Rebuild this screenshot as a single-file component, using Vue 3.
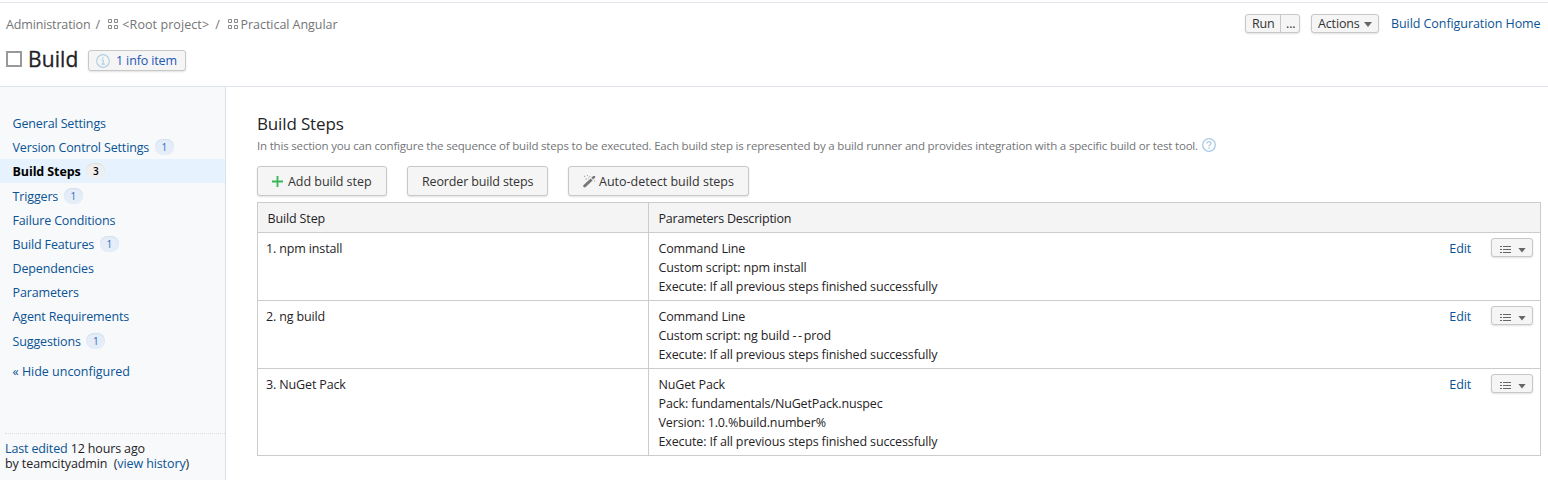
<script setup>
const menu = [
  { label: 'General Settings' },
  { label: 'Version Control Settings', count: 1 },
  { label: 'Build Steps', count: 3, active: true },
  { label: 'Triggers', count: 1 },
  { label: 'Failure Conditions' },
  { label: 'Build Features', count: 1 },
  { label: 'Dependencies' },
  { label: 'Parameters' },
  { label: 'Agent Requirements' },
  { label: 'Suggestions', count: 1 },
]

const steps = [
  {
    name: '1. npm install',
    lines: ['Command Line', 'Custom script: npm install', 'Execute: If all previous steps finished successfully'],
  },
  {
    name: '2. ng build',
    lines: ['Command Line', 'Custom script: ng build --prod', 'Execute: If all previous steps finished successfully'],
  },
  {
    name: '3. NuGet Pack',
    lines: [
      'NuGet Pack',
      'Pack: fundamentals/NuGetPack.nuspec',
      'Version: 1.0.%build.number%',
      'Execute: If all previous steps finished successfully',
    ],
  },
]
</script>

<template>
  <div class="page">
    <header class="header">
      <div class="bar">
        <nav class="crumbs">
          <span>Administration</span>
          <span class="sep">/</span>
          <svg class="grid-icon" width="11" height="11" viewBox="0 0 11 11">
            <path d="M.5.5h3v3H.5zM6.5.5h3v3H6.5zM.5 6.5h3v3H.5zM6.5 6.5h3v3H6.5z" />
          </svg>
          <span class="root">&lt;Root project&gt;</span>
          <span class="sep second">/</span>
          <svg class="grid-icon" width="11" height="11" viewBox="0 0 11 11">
            <path d="M.5.5h3v3H.5zM6.5.5h3v3H6.5zM.5 6.5h3v3H.5zM6.5 6.5h3v3H6.5z" />
          </svg>
          <span class="project">Practical Angular</span>
        </nav>
        <div class="tools">
          <div class="btn small run"><span>Run</span><span class="more">...</span></div>
          <div class="btn small actions"><span>Actions</span><i class="caret"></i></div>
          <a class="home">Build Configuration Home</a>
        </div>
      </div>
      <div class="title-row">
        <i class="status-box"></i>
        <h1>Build</h1>
        <div class="btn small info">
          <svg width="14" height="14" viewBox="0 0 14 14" fill="none" stroke="#b4d0e6" stroke-width="1.2">
            <circle cx="7" cy="7" r="6.3" />
            <path d="M7 3.1v1.4M5.4 6h1.8v4.2M5.2 10.2h3.8" />
          </svg>
          <a>1 info item</a>
        </div>
      </div>
    </header>

    <div class="body">
      <aside class="sidebar">
        <ul class="menu">
          <li v-for="item in menu" :key="item.label" :class="{ active: item.active }">
            <a>{{ item.label }}</a>
            <span v-if="item.count" class="badge">{{ item.count }}</span>
          </li>
        </ul>
        <a class="hide">« Hide unconfigured</a>
        <div class="edited">
          <div class="when"><a>Last edited</a> 12 hours ago</div>
          <div class="who">by teamcityadmin&nbsp; (<a>view history</a>)</div>
        </div>
      </aside>

      <main class="main">
        <h2>Build Steps</h2>
        <div class="note">
          <span>In this section you can configure the sequence of build steps to be executed. Each build step is represented by a build runner and provides integration with a specific build or test tool.</span>
          <svg width="14" height="14" viewBox="0 0 14 14" fill="none" stroke="#a9cbe5" stroke-width="1.3">
            <circle cx="7" cy="7" r="6.3" />
            <path d="M5 5.4C5 2.9 9 3 9 5.3 9 6.7 7 6.7 7 8.4M7 9.6v1.3" />
          </svg>
        </div>
        <div class="buttons">
          <div class="btn large add">
            <svg width="11" height="11" viewBox="0 0 11 11" stroke="#37b757" stroke-width="1.8">
              <path d="M5.5 0v11M0 5.5h11" />
            </svg>
            <span>Add build step</span>
          </div>
          <div class="btn large reorder"><span>Reorder build steps</span></div>
          <div class="btn large detect">
            <svg width="13" height="13" viewBox="0 0 13 13">
              <path d="M.3 10.2 7.6 3.4l2 2-7.4 7L.3 12z" fill="#777" />
              <path d="m8.3 2.8 1.9-1.9h1.9v1.7l-1.9 2z" fill="#777" />
              <path d="M1 .8h1.2v1.2H1zM4 0h1v1H4zM6.4 1h1v1h-1zM2.5 3.5h1.3v1.3H2.5zM5 2.6h1v1H5zM11 5.5h1.1v1.1H11z" fill="#aaa" />
            </svg>
            <span>Auto-detect build steps</span>
          </div>
        </div>

        <div class="table">
          <div class="row head">
            <div class="cell">Build Step</div>
            <div class="cell">Parameters Description</div>
          </div>
          <div v-for="step in steps" :key="step.name" class="row">
            <div class="cell name">{{ step.name }}</div>
            <div class="cell params">
              <div class="lines">
                <div v-for="line in step.lines" :key="line"><span>{{ line.split('--')[0] }}</span><span v-if="line.includes('--')" class="dashes">--</span><span>{{ line.split('--')[1] }}</span></div>
              </div>
              <a class="edit">Edit</a>
              <div class="btn small list-btn">
                <svg width="11" height="8" viewBox="0 0 11 8" shape-rendering="crispEdges">
                  <path d="M0 0h2v1H0zM3 0h8v1H3zM0 3h2v1H0zM3 3h8v1H3zM0 6h2v1H0zM3 6h8v1H3z" fill="#666" />
                </svg>
                <i class="caret"></i>
              </div>
            </div>
          </div>
        </div>
      </main>
    </div>
  </div>
</template>

<style>
body {
  margin: 0;
  background: #fff;
}
</style>

<style scoped>
* {
  box-sizing: border-box;
}
.page {
  width: 1548px;
  height: 480px;
  overflow: hidden;
  font-family: "Open Sans", "Noto Sans", sans-serif;
  font-size: 12.5px;
  letter-spacing: -0.14px;
  line-height: 19px;
  color: #1f2326;
  white-space: nowrap;
}
a {
  color: #0b5394;
}
.header {
  height: 87px;
  padding-top: 2px;
  border-bottom: 1px solid #dfe5eb;
}
.bar {
  display: flex;
  justify-content: space-between;
  height: 43px;
  padding: 10px 8px 0 6px;
  border-top: 1px solid #dfe5eb;
}
.crumbs {
  display: flex;
  align-items: center;
  height: 23px;
  color: #737577;
}
.sep {
  margin: 0 8px 0 5px;
}
.second {
  margin-left: 6px;
}
.grid-icon {
  fill: none;
  stroke: #888;
  stroke-width: 1;
}
.root {
  margin-left: 3.5px;
  letter-spacing: 0.08px;
}
.project {
  margin-left: 2px;
  letter-spacing: -0.05px;
}
.tools {
  display: flex;
}
.btn {
  display: flex;
  align-items: center;
  border: 1px solid #c8c8c8;
  border-radius: 3px;
  background: #f5f5f5;
  box-shadow: 0 1px 2px rgba(0, 0, 0, 0.12);
  color: #333;
}
.run {
  width: 55px;
  height: 19px;
  margin: 1px 11px 0 0;
  padding-left: 6px;
}
.more {
  width: 19px;
  height: 17px;
  margin-left: auto;
  padding-left: 5px;
  border-left: 1px solid #c8c8c8;
  line-height: 17px;
}
.actions {
  width: 68px;
  height: 19px;
  margin: 1px 12px 0 0;
  padding: 0 6px;
  justify-content: space-between;
}
.caret {
  width: 8px;
  height: 5px;
  margin-top: 2px;
  background: #666;
  clip-path: polygon(0 0, 100% 0, 50% 100%);
}
.home {
  width: 149px;
  letter-spacing: -0.07px;
  line-height: 21px;
}
.title-row {
  display: flex;
  align-items: center;
  height: 28px;
  padding-left: 6px;
}
.status-box {
  width: 16px;
  height: 16px;
  border: 2px solid #999;
}
h1 {
  width: 49px;
  margin: 0 11px 0 6px;
  color: #1f2326;
  font-size: 21px;
  font-weight: 500;
  letter-spacing: 0.1px;
  line-height: 28px;
  -webkit-text-stroke: 0.3px #1f2326;
}
.info {
  width: 98px;
  height: 21px;
  margin-top: 3px;
  padding-left: 7px;
}
.info a {
  margin-left: 6px;
  color: #2356b5;
}
.body {
  display: flex;
  height: 393px;
}
.sidebar {
  display: flex;
  flex-direction: column;
  width: 226px;
  border-right: 1px solid #dbe2e9;
  background: #f7f9fb;
}
.menu {
  margin: 23.7px 0 0;
  padding: 0;
  list-style: none;
}
.menu li {
  display: flex;
  align-items: center;
  height: 24.2px;
  padding: 1.4px 0 0 12.5px;
}
.menu .active {
  background: #e6f2fd;
}
.active a {
  color: #000;
  font-weight: 700;
  letter-spacing: -0.1px;
}
.badge {
  width: 19px;
  height: 16px;
  margin: -1px 0 0 5.6px;
  border-radius: 8px;
  background: #e4edf8;
  box-shadow: inset 0 1px 1px #d3dfed;
  color: #3567c0;
  font-size: 10px;
  line-height: 17px;
  text-align: center;
}
.active .badge {
  background: #efefef;
  box-shadow: inset 0 1px 1px #dedede;
  color: #000;
  font-weight: 600;
}
.hide {
  margin: 9.4px 0 0 12.5px;
  letter-spacing: -0.02px;
}
.edited {
  margin: auto 0 9px 5px;
  padding-top: 7px;
  border-top: 1px dotted #d9dde1;
  line-height: 15px;
}
.who {
  letter-spacing: -0.1px;
}
.main {
  flex: 1;
  padding: 25px 7px 0 31px;
}
h2 {
  margin: 0;
  font-size: 17px;
  font-weight: 400;
  letter-spacing: -0.15px;
  line-height: 23px;
}
.note {
  display: flex;
  align-items: center;
  height: 19px;
  margin-top: 1px;
  color: #737577;
  font-size: 11.5px;
  letter-spacing: -0.183px;
}
.note svg {
  margin: -2px 0 0 4px;
}
.buttons {
  display: flex;
  gap: 20px;
  margin: 11px 0 6px;
}
.large {
  height: 30px;
  padding-left: 14px;
}
.add {
  width: 130px;
}
.add span {
  margin-left: 5px;
  letter-spacing: -0.04px;
}
.reorder {
  width: 141px;
}
.detect {
  width: 181px;
}
.detect span {
  margin-left: 3px;
  letter-spacing: 0;
}
.table {
  border: 1px solid #ccc;
}
.row {
  display: grid;
  grid-template-columns: 390px 1fr;
}
.row + .row {
  border-top: 1px solid #ccc;
}
.cell {
  padding: 6px 7px 4px 8px;
}
.cell + .cell {
  padding-left: 9.5px;
  border-left: 1px solid #ccc;
}
.head {
  background: #f4f4f4;
}
.head .cell {
  padding: 6px 9px 4px 9.5px;
}
.head .cell + .cell {
  letter-spacing: -0.22px;
}
.params {
  display: flex;
  align-items: flex-start;
}
.dashes {
  letter-spacing: 1.6px;
}
.edit {
  margin: 0 20px 0 auto;
}
.list-btn {
  width: 42px;
  height: 19px;
  margin-top: -1px;
  padding: 3px 6px 0 8px;
  justify-content: space-between;
}
.list-btn svg {
  margin-top: 2px;
}
</style>
